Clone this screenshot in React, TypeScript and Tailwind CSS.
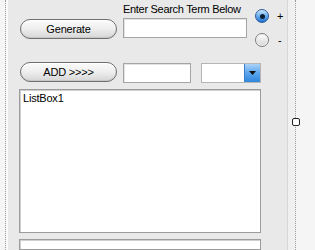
import React from "react";

const font = { fontFamily: '"Liberation Sans", Arial, sans-serif' };

function PillButton({ label }: { label: string }) {
  return (
    <div className="w-[97px] h-[20px] rounded-full border border-[#6f6f6f] bg-gradient-to-b from-[#fbfbfb] via-[#eeeeee] to-[#d6d6d6] shadow-[inset_0_1px_0_#ffffff,inset_0_-1px_0_#c8c8c8] flex items-center justify-center text-[11px] text-black tracking-[-0.2px]">
      {label}
    </div>
  );
}

function TextBox({ w }: { w: string }) {
  return <div className={`${w} h-[20px] bg-white border border-[#a5a5a5] shadow-[inset_1px_1px_0_#e2e2e2]`} />;
}

function Radio({ checked }: { checked: boolean }) {
  return checked ? (
    <div className="w-[14px] h-[14px] rounded-full border border-[#2d5f9a] bg-gradient-to-b from-[#cde6fb] via-[#6aaef0] to-[#1c6fcf] flex items-center justify-center">
      <div className="w-[5px] h-[5px] rounded-full bg-[#0d1f33]" />
    </div>
  ) : (
    <div className="w-[14px] h-[14px] rounded-full border border-[#7c7c7c] bg-gradient-to-b from-[#ffffff] to-[#d4d4d4] shadow-[inset_0_0_0_1px_#f4f4f4]" />
  );
}

export default function App() {
  return (
    <div className="w-[315px] h-[250px] overflow-hidden flex bg-[#f5f5f5]" style={font}>
      <div className="w-[5px] shrink-0" />
      <div className="w-px shrink-0 border-l border-dotted border-[#9a9a9a]" />
      <div className="w-[2px] shrink-0 bg-[#fafafa]" />
      {/* form */}
      <div className="w-[279px] shrink-0 bg-[#e9e9e9] flex flex-col">
        {/* row 1 */}
        <div className="flex items-start h-[48px]">
          <div className="ml-[12px] mt-[19px]">
            <PillButton label="Generate" />
          </div>
          <div className="ml-[6px] flex flex-col">
            <div className="mt-[2px] h-[14px] leading-[14px] text-[11px] text-black tracking-[-0.3px] whitespace-nowrap">
              Enter Search Term Below
            </div>
            <div className="mt-[2px]">
              <TextBox w="w-[124px]" />
            </div>
          </div>
          <div className="ml-[8px] flex flex-col">
            <div className="mt-[9px] flex items-center">
              <Radio checked />
              <span className="ml-[8px] text-[11px] leading-[14px] text-black">+</span>
            </div>
            <div className="mt-[10px] flex items-center">
              <Radio checked={false} />
              <span className="ml-[9px] text-[11px] leading-[14px] text-black">-</span>
            </div>
          </div>
        </div>
        {/* row 2 */}
        <div className="flex items-start mt-[14px] h-[21px]">
          <div className="ml-[12px]">
            <PillButton label="ADD >>>>" />
          </div>
          <div className="ml-[6px] mt-[1px]">
            <TextBox w="w-[68px]" />
          </div>
          <div className="ml-[10px] mt-[1px] w-[60px] h-[20px] bg-white border border-[#b5b5b5] flex justify-end">
            <div className="w-[16px] h-full bg-gradient-to-b from-[#a9d3f7] via-[#5aa5ee] to-[#2f86dc] border-l border-[#3c7fc8] flex items-center justify-center">
              <svg width="7" height="4" viewBox="0 0 7 4">
                <path d="M0 0 H7 L3.5 4 Z" fill="#111" />
              </svg>
            </div>
          </div>
        </div>
        {/* listbox */}
        <div className="ml-[11px] mt-[6px] w-[242px] h-[144px] bg-white border border-[#9c9c9c] shadow-[inset_1px_1px_0_#cfcfcf]">
          <div className="pl-[3px] pt-[2px] text-[11px] leading-[13px] text-black tracking-[-0.2px]">ListBox1</div>
        </div>
        <div className="ml-[11px] mt-[6px] w-[242px] flex-1 bg-white border border-[#9c9c9c] shadow-[inset_1px_1px_0_#cfcfcf]" />
      </div>
      <div className="w-px shrink-0 bg-[#d7d7d7]" />
      <div className="w-[7px] shrink-0 bg-[#f0f0f0]" />
      <div className="relative w-px shrink-0 border-l border-dotted border-[#9a9a9a]">
        <div className="absolute left-[-4px] top-[118px] w-[8px] h-[8px] rounded-[2px] border-[1.5px] border-[#222] bg-white" />
      </div>
      <div className="flex-1 bg-[#f5f5f5]" />
    </div>
  );
}
